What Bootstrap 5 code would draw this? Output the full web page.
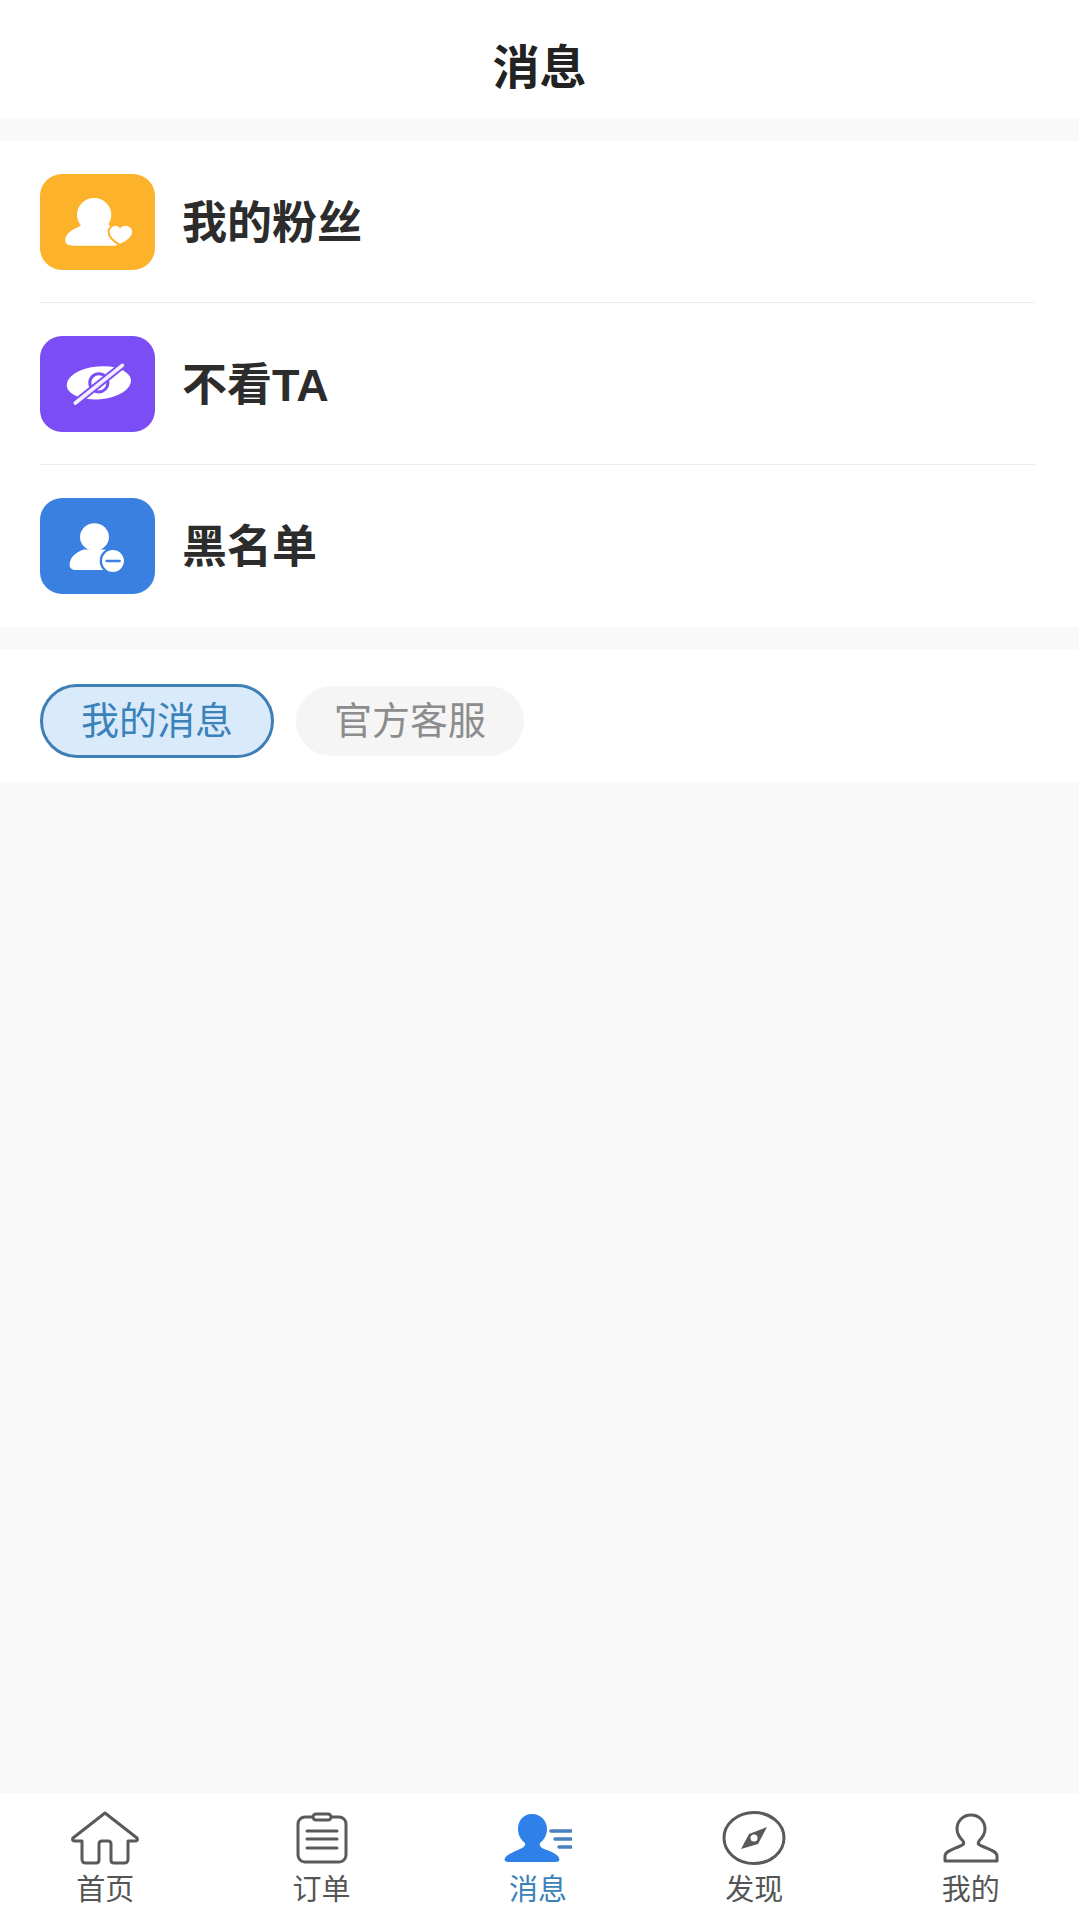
<!DOCTYPE html>
<html lang="zh-CN">
<head>
    <meta charset="UTF-8">
    <meta name="viewport" content="width=device-width, initial-scale=1.0">
    <title>消息</title>
    <link href="https://cdn.jsdelivr.net/npm/bootstrap@5.3.0/dist/css/bootstrap.min.css" rel="stylesheet">
    <style>
        html, body { height: 100%; }
        body {
            background: #f9f9f9;
            font-family: "Liberation Sans", "Noto Sans CJK SC", sans-serif;
            color: #2b2b2b;
        }
        .page-wrap { height: 1919px; }
        .top-title { height: 118px; padding-top: 19px; background: #fff; font-size: 47px; font-weight: 700; color: #222; }
        .menu-box { margin-top: 23px; background: #fff; padding: 0 44px 0 40px; }
        .menu-row { height: 162px; gap: 27px; border-bottom: 2px solid #eee; font-size: 45px; font-weight: 700; color: #2c2c2c; background: none; }
        .menu-row:last-child { border-bottom: 0; height: 162px; }
        .menu-row > span:last-child { padding-top: 4px; }
        .menu-ico { width: 115px; height: 96px; border-radius: 22px; overflow: hidden; }
        .ico-yellow { background: #fdb22b; }
        .ico-purple { background: #7b4ef5; }
        .ico-blue { background: #3a80e0; }
        .tab-box { margin-top: 22px; height: 133px; background: #fff; padding: 11px 40px 0; gap: 22px; }
        .tab-pill { height: 70px; width: 228px; border-radius: 35px; font-size: 38px; background: #f5f5f5; color: #8c8c8c; }
        .tab-on { height: 74px; width: 234px; border-radius: 37px; background: #d9eafb; color: #3b82b8; border: 3px solid #3f7fb5; }
        .bottom-bar { height: 126px; background: #fff; margin-left: -3px; }
        .bar-item { width: 20%; font-size: 29px; line-height: 1; color: #555; padding-top: 18px; gap: 11px; }
        .bar-ico { height: 54px; }
        .bar-on { color: #3b82b8; }
    </style>
</head>
<body>
    <div class="page-wrap d-flex flex-column">
        <!-- Header -->
        <div class="top-title d-flex align-items-center justify-content-center">消息</div>

        <!-- Menu -->
        <ul class="list-group list-group-flush menu-box">
            <li class="list-group-item menu-row d-flex align-items-center px-0">
                <span class="menu-ico ico-yellow d-block">
                    <svg width="115" height="96" viewBox="30 25 342 285">
                        <ellipse cx="191" cy="146" rx="51" ry="50" fill="#fff"/>
                        <path d="M152 178C130 190 105 198 105 222 105 234 115 238 130 238H250C262 238 268 232 262 215L236 176Z" fill="#fff"/>
                        <path d="M268 236C244 222 234 210 234 197 234 184 245 176 255 176 261 176 265 178 268 182 271 178 277 176 284 176 297 176 307 185 307 197 307 210 294 224 268 236Z" fill="#fff" stroke="#fdb22b" stroke-width="6"/>
                    </svg>
                </span>
                <span>我的粉丝</span>
            </li>
            <li class="list-group-item menu-row d-flex align-items-center px-0">
                <span class="menu-ico ico-purple d-block">
                    <svg width="115" height="96" viewBox="30 25 342 285">
                        <ellipse cx="205" cy="164" rx="96" ry="49" transform="rotate(-5 205 164)" fill="#fff"/>
                        <circle cx="205" cy="164" r="27" fill="none" stroke="#7b4ef5" stroke-width="9"/>
                        <path d="M135 224 275 112" stroke="#7b4ef5" stroke-width="22"/>
                        <path d="M135 224 275 112" stroke="#f3eefe" stroke-width="11" stroke-linecap="round"/>
                    </svg>
                </span>
                <span>不看TA</span>
            </li>
            <li class="list-group-item menu-row d-flex align-items-center px-0">
                <span class="menu-ico ico-blue d-block">
                    <svg width="115" height="96" viewBox="30 25 342 285">
                        <ellipse cx="192" cy="141" rx="43" ry="41" fill="#fff"/>
                        <path d="M160 178C140 186 118 198 118 224 118 234 126 239 136 239H230L250 190 222 178Z" fill="#fff"/>
                        <circle cx="247" cy="212" r="36" fill="#fff" stroke="#3a80e0" stroke-width="7"/>
                        <path d="M228 212H267" stroke="#3a80e0" stroke-width="7" stroke-linecap="round"/>
                    </svg>
                </span>
                <span>黑名单</span>
            </li>
        </ul>

        <!-- Tabs -->
        <div class="tab-box d-flex align-items-center">
            <div class="tab-pill tab-on d-flex align-items-center justify-content-center">我的消息</div>
            <div class="tab-pill d-flex align-items-center justify-content-center">官方客服</div>
        </div>

        <div class="flex-grow-1"></div>

        <!-- Bottom tab bar -->
        <nav class="bottom-bar d-flex">
            <div class="bar-item d-flex flex-column align-items-center">
                <div class="bar-ico d-flex align-items-center">
                    <svg width="68" height="54" viewBox="0 0 68 54" fill="none" stroke="#5a5a5a" stroke-width="3" stroke-linejoin="round" stroke-linecap="round"><path d="M34 2 2 27c-1 2 0 3 2 3h7v18c0 3 1 4 4 4h10c2 0 3-1 3-3V33c0-2 1-3 3-3h6c2 0 3 1 3 3v16c0 2 1 3 3 3h10c3 0 4-1 4-4V30h7c2 0 3-1 2-3z"/></svg>
                </div>
                <span>首页</span>
            </div>
            <div class="bar-item d-flex flex-column align-items-center">
                <div class="bar-ico d-flex align-items-center">
                    <svg width="52" height="52" viewBox="0 0 52 52" fill="none" stroke="#5a5a5a" stroke-width="3" stroke-linecap="round"><rect x="2" y="5" width="48" height="45" rx="7"/><rect x="17" y="2" width="18" height="6" rx="3" fill="#fff"/><path d="M11 19h30M11 27h30M11 36h30"/></svg>
                </div>
                <span>订单</span>
            </div>
            <div class="bar-item bar-on d-flex flex-column align-items-center">
                <div class="bar-ico d-flex align-items-center">
                    <svg width="68" height="48" viewBox="0 0 68 48"><path d="M28 0c9 0 15 7 15 15 0 6-3 11-7 14-1 3 1 5 7 7 7 3 11 5 12 8 1 2 0 4-3 4H4c-3 0-4-2-3-4 2-3 6-5 13-8 5-2 8-4 7-7-4-3-7-8-7-14C14 7 19 0 28 0z" fill="#2f80e8"/><path d="M47 17H67M51 25H67M55 33H67" stroke="#4a7fc0" stroke-width="3.5" stroke-linecap="round"/></svg>
                </div>
                <span>消息</span>
            </div>
            <div class="bar-item d-flex flex-column align-items-center">
                <div class="bar-ico d-flex align-items-center">
                    <svg width="64" height="54" viewBox="0 0 64 54"><ellipse cx="32" cy="27" rx="30" ry="25.5" fill="none" stroke="#5a5a5a" stroke-width="3"/><path d="M45 16 36 33 19 38 27 23z" fill="#5a5a5a"/><circle cx="32" cy="27" r="3.5" fill="#fff"/></svg>
                </div>
                <span>发现</span>
            </div>
            <div class="bar-item d-flex flex-column align-items-center">
                <div class="bar-ico d-flex align-items-center">
                    <svg width="56" height="50" viewBox="0 0 56 50" fill="none" stroke="#5a5a5a" stroke-width="3" stroke-linejoin="round"><path d="M28 2c8 0 14 6 14 14 0 5-3 9-6 12-2 3 0 4 5 6 7 3 13 5 13 9v5H2v-5c0-4 6-6 13-9 5-2 7-3 5-6-3-3-6-7-6-12C14 8 20 2 28 2z"/></svg>
                </div>
                <span>我的</span>
            </div>
        </nav>
    </div>

    <script src="https://cdn.jsdelivr.net/npm/bootstrap@5.3.0/dist/js/bootstrap.bundle.min.js"></script>
</body>
</html>
